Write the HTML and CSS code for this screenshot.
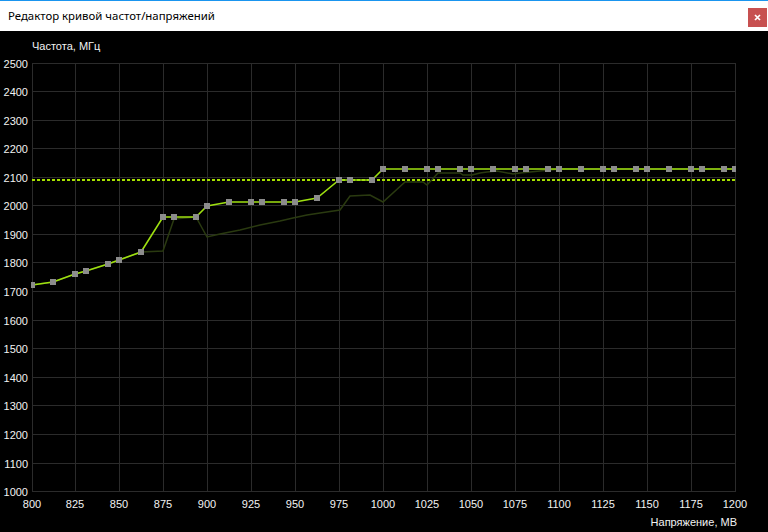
FILE: index.html
```html
<!DOCTYPE html>
<html lang="ru">
<head>
<meta charset="utf-8">
<title>Редактор кривой частот/напряжений</title>
<link rel="stylesheet" href="styles.css">
</head>
<body>
<div class="window">
  <header class="titlebar">
    <span class="title">Редактор кривой частот/напряжений</span>
    <button class="close" aria-label="Закрыть">
      <svg class="close-icon" width="19" height="19" viewBox="0 0 19 19"><path d="M7 7 L12 12 M12 7 L7 12"/></svg>
    </button>
  </header>
  <main class="chart">
    <svg class="plot" width="768" height="501" viewBox="0 31 768 501">
      <defs>
        <clipPath id="plotclip"><rect x="31" y="60" width="705" height="433"/></clipPath>
      </defs>
      <path class="grid" d="M32 63.5H736M32 91.5H736M32 120.5H736M32 148.5H736M32 177.5H736M32 205.5H736M32 234.5H736M32 262.5H736M32 291.5H736M32 320.5H736M32 348.5H736M32 377.5H736M32 405.5H736M32 434.5H736M32 463.5H736M32 491.5H736
M32.5 63V492M75.5 63V492M119.5 63V492M163.5 63V492M207.5 63V492M251.5 63V492M295.5 63V492M339.5 63V492M383.5 63V492M427.5 63V492M471.5 63V492M515.5 63V492M559.5 63V492M603.5 63V492M647.5 63V492M691.5 63V492M735.5 63V492"/>

      <text class="lbl" x="32" y="50">Частота, МГц</text>
      <g class="ylabels">
        <text x="28" y="67.5">2500</text>
        <text x="28" y="95.5">2400</text>
        <text x="28" y="124.5">2300</text>
        <text x="28" y="152.5">2200</text>
        <text x="28" y="181.5">2100</text>
        <text x="28" y="209.5">2000</text>
        <text x="28" y="238.5">1900</text>
        <text x="28" y="266.5">1800</text>
        <text x="28" y="295.5">1700</text>
        <text x="28" y="324.5">1600</text>
        <text x="28" y="352.5">1500</text>
        <text x="28" y="381.5">1400</text>
        <text x="28" y="409.5">1300</text>
        <text x="28" y="438.5">1200</text>
        <text x="28" y="467.5">1100</text>
        <text x="28" y="495.5">1000</text>
      </g>
      <g class="xlabels">
        <text x="32" y="507.5">800</text>
        <text x="75" y="507.5">825</text>
        <text x="119" y="507.5">850</text>
        <text x="163" y="507.5">875</text>
        <text x="207" y="507.5">900</text>
        <text x="251" y="507.5">925</text>
        <text x="295" y="507.5">950</text>
        <text x="339" y="507.5">975</text>
        <text x="383" y="507.5">1000</text>
        <text x="427" y="507.5">1025</text>
        <text x="471" y="507.5">1050</text>
        <text x="515" y="507.5">1075</text>
        <text x="559" y="507.5">1100</text>
        <text x="603" y="507.5">1125</text>
        <text x="647" y="507.5">1150</text>
        <text x="691" y="507.5">1175</text>
        <text x="735" y="507.5">1200</text>
      </g>
      <text class="lbl lbl-end" x="737" y="526">Напряжение, МВ</text>

      <g clip-path="url(#plotclip)">
        <path class="target" d="M32 180H736"/>
        <polyline class="actual" points="32,285 53,282 75,274 86,271 108,264 119,260 141,252 163,251 174,219 196,217 207,237 220,234 240,230 260,225 280,221 293,218 307,215 320,213 340,210 350,196 370,195 383,202 405,182 423,182 427,185 438,173 460,173 463,175 472,175 480,173 487,172 497,171 513,174 520,173 540,171 560,169 736,169"/>
        <polyline class="curve" points="32,285 53,282 75,274 86,271 108,264 119,260 141,252 163,217 174,217 196,217 207,206 229,202 251,202 262,202 284,202 295,202 317,198 339,180 350,180 372,180 383,169 405,169 427,169 438,169 460,169 471,169 493,169 515,169 526,169 548,169 559,169 581,169 603,169 614,169 636,169 647,169 669,169 691,169 702,169 724,169 735,169"/>
        <g class="pts">
          <rect x="29" y="282"/><rect x="50" y="279"/><rect x="72" y="271"/><rect x="83" y="268"/><rect x="105" y="261"/><rect x="116" y="257"/><rect x="138" y="249"/>
          <rect x="160" y="214"/><rect x="171" y="214"/><rect x="193" y="214"/>
          <rect x="204" y="203"/><rect x="226" y="199"/><rect x="248" y="199"/><rect x="259" y="199"/><rect x="281" y="199"/><rect x="292" y="199"/>
          <rect x="314" y="195"/>
          <rect x="336" y="177"/><rect x="347" y="177"/><rect x="369" y="177"/>
          <rect x="380" y="166"/><rect x="402" y="166"/><rect x="424" y="166"/><rect x="435" y="166"/><rect x="457" y="166"/><rect x="468" y="166"/><rect x="490" y="166"/><rect x="512" y="166"/><rect x="523" y="166"/><rect x="545" y="166"/><rect x="556" y="166"/><rect x="578" y="166"/><rect x="600" y="166"/><rect x="611" y="166"/><rect x="633" y="166"/><rect x="644" y="166"/><rect x="666" y="166"/><rect x="688" y="166"/><rect x="699" y="166"/><rect x="721" y="166"/><rect x="732" y="166"/>
        </g>
      </g>
    </svg>
  </main>
</div>
</body>
</html>
```
FILE: styles.css
```css
html, body {
  margin: 0;
  padding: 0;
  background: #000;
}

.window {
  width: 768px;
  height: 532px;
  display: flex;
  flex-direction: column;
  background: #000;
  overflow: hidden;
}

.titlebar {
  flex: none;
  height: 30px;
  border-top: 1px solid #1a95ef;
  background: #fff;
  display: flex;
  align-items: flex-start;
}

.title {
  flex: 1;
  padding-left: 8px;
  font-family: "Noto Sans", "Open Sans", sans-serif;
  font-size: 11.4px;
  line-height: 30px;
  color: #000;
  white-space: nowrap;
}

.close {
  width: 19px;
  height: 19px;
  margin: 7px 1px 0 0;
  padding: 0;
  border: 0;
  background: #c75050;
  display: flex;
  align-items: center;
  justify-content: center;
}

.close-icon {
  display: block;
}

.close-icon path {
  stroke: #fff;
  stroke-width: 1.7;
  fill: none;
}

.chart {
  flex: 1;
}

.plot {
  display: block;
}

.grid {
  stroke: #2b2b2b;
  stroke-width: 1;
  fill: none;
}

.plot text {
  font-family: "Liberation Sans", Arial, sans-serif;
  font-size: 11px;
  fill: #f2f2f2;
}

.ylabels text {
  text-anchor: end;
}

.xlabels text {
  text-anchor: middle;
}

.lbl-end {
  text-anchor: end;
}

.target {
  stroke: #a6e000;
  stroke-width: 2;
  stroke-dasharray: 3 2;
  fill: none;
}

.actual {
  stroke: #2a3a10;
  stroke-width: 1.5;
  fill: none;
}

.curve {
  stroke: #9ee010;
  stroke-width: 1.6;
  fill: none;
}

.pts rect {
  width: 6px;
  height: 6px;
  fill: #8c8c8c;
}
```
